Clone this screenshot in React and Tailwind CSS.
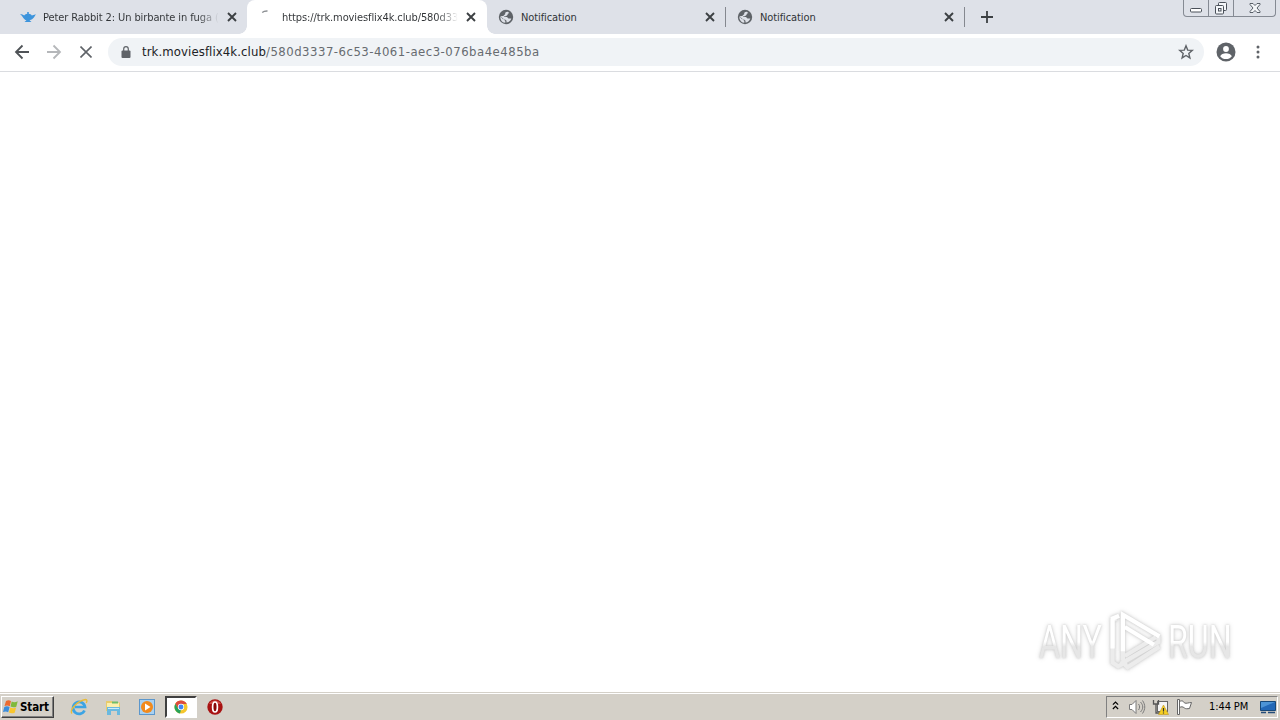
import React from "react";

const TABS = [
  { title: "Peter Rabbit 2: Un birbante in fuga (", icon: "lamp" },
  { title: "https://trk.moviesflix4k.club/580d33", icon: "loading", active: true },
  { title: "Notification", icon: "globe", divider: true },
  { title: "Notification", icon: "globe", divider: true },
];

function TabIcon({ name }) {
  if (name === "lamp") {
    return (
      <svg viewBox="0 0 16 16" className="h-4 w-4" fill="#3d94dc">
        <path d="M0 5.2c2 0 3 .5 4.2 1.3C5 5.400 6.200 5 7.200 4.800V3h1.600v1.800c1.400.2 2.400.8 3 1.700L16 5.200c-1.200 1-1.800 4.400-5 5.500l-1.500.6 2 1.700h-7l2-1.700C3.300 10.400 3 7 0 5.200z" />
      </svg>
    );
  }
  if (name === "loading") {
    return (
      <svg viewBox="0 0 16 16" className="h-4 w-4" fill="none">
        <path d="M3.200 3.500C4.500 2.300 6 1.900 8.500 2" stroke="#8b8e92" strokeWidth="1.300" />
      </svg>
    );
  }
  return (
    <svg viewBox="0 0 16 16" className="-ml-px h-4 w-4">
      <circle cx="8" cy="8" r="7.200" fill="#5f6368" />
      <path
        d="M9.800 2.800C7.500 2.800 7 4 7.200 5.200L5.500 6.500 6.300 8H9l1.500 1.500h2.800c-.6 2.200-2.500 3.900-4.800 4.100v-1.800L7 10.500l-2-.3-2.600-2.800c-.3 2.600 1 5 3.200 6l1.700.3V12L5 9.500 2.400 7.200 5 7l2.800.2L9.500 6l.3-1.300 1.500-.8z"
        fill="#dee1e8"
      />
    </svg>
  );
}

function Cross({ className }) {
  return (
    <svg viewBox="0 0 10 10" className={className} fill="none">
      <path d="M1 1l8 8M9 1 1 9" stroke="currentColor" strokeWidth="1.900" />
    </svg>
  );
}

function Tab({ title, icon, active, divider }) {
  return (
    <div
      className={
        active
          ? "relative flex h-[34px] w-60 items-center rounded-t-lg bg-white pl-3"
          : "relative flex h-[34px] w-[239px] items-center pl-3"
      }
    >
      {active && (
        <>
          <div className="absolute bottom-0 -left-2 h-2 w-2 bg-[radial-gradient(circle_at_0_0,transparent_7.500px,#fff_8px)]" />
          <div className="absolute -right-2 bottom-0 h-2 w-2 bg-[radial-gradient(circle_at_100%_0,transparent_7.500px,#fff_8px)]" />
        </>
      )}
      <TabIcon name={icon} />
      <div
        className={
          icon === "globe"
            ? "ml-[7px] w-[176px] overflow-hidden pt-[2px] text-[11px] tracking-[-0.1px] whitespace-nowrap"
            : "ml-[7px] w-[176px] overflow-hidden bg-linear-to-r from-[#303336] from-88% to-transparent bg-clip-text pt-[2px] text-[11px] tracking-[-0.1px] whitespace-nowrap text-transparent"
        }
      >
        {title}
      </div>
      <Cross className="ml-[8px] h-[10px] w-[10px] text-[#3c4043]" />
      {divider && <div className="ml-auto h-5 w-px bg-[#85888f]" />}
    </div>
  );
}

function WindowButtons() {
  return (
    <div className="ml-auto flex h-[17px] w-[93px] rounded-b-[4px] border border-t-0 border-[#858a93]">
      <div className="flex w-[25px] items-center justify-center border-r border-[#858a93]">
        <svg viewBox="0 0 12 16" className="h-4 w-3" fill="#fff" stroke="#4a5059">
          <rect x=".5" y="8.500" width="11" height="3.500" rx="1" />
        </svg>
      </div>
      <div className="flex w-[25px] items-center justify-center border-r border-[#858a93]">
        <svg viewBox="0 0 14 16" className="-ml-px h-4 w-3.5" fill="#f4f6f9" stroke="#4a5059">
          <rect x="4.500" y="2.500" width="8" height="8" rx="1" />
          <rect x="1.500" y="5.500" width="8" height="8.500" rx="1" />
          <rect x="4.500" y="8.500" width="2.500" height="2.500" />
        </svg>
      </div>
      <div className="flex flex-1 items-center justify-center">
        <svg viewBox="0 0 12 12" className="h-3 w-3" fill="#f4f6f9" stroke="#4a5059" strokeWidth=".9">
          <path d="M1 1.500h3l2 2 2-2h3v1L8 6l3 3.500v1H8l-2-2-2 2H1v-1L4 6 1 2.500z" />
        </svg>
      </div>
    </div>
  );
}

function TabStrip() {
  return (
    <div className="flex h-[34px] bg-[#dee1e8] pl-2 text-[#303336]">
      {TABS.map((tab, i) => (
        <Tab key={i} {...tab} />
      ))}
      <svg viewBox="0 0 12 12" className="mt-[11px] ml-[16px] h-3 w-3">
        <path d="M6 0v12M0 6h12" stroke="#3c4043" strokeWidth="1.800" />
      </svg>
      <WindowButtons />
      <div className="w-1" />
    </div>
  );
}

function Toolbar() {
  return (
    <div className="flex h-[38px] items-center border-b border-[#dadce0] bg-white pb-px pl-[14px] text-[#5f6368]">
      <svg viewBox="0 0 16 16" className="h-4 w-4" fill="none" stroke="#4f5357" strokeWidth="1.800">
        <path d="M15 8H2M8.500 1.500 2 8l6.500 6.500" />
      </svg>
      <svg viewBox="0 0 16 16" className="ml-4 h-4 w-4" fill="none" stroke="#b5b7ba" strokeWidth="1.800">
        <path d="M1 8h13M7.500 1.500 14 8l-6.500 6.500" />
      </svg>
      <svg viewBox="0 0 12 12" className="ml-[18px] h-3 w-3" fill="none" stroke="#5f6368" strokeWidth="1.600">
        <path d="M.5.5l11 11M11.500.5l-11 11" />
      </svg>
      <div className="ml-[16px] flex h-7 w-[1096px] items-center rounded-full bg-[#f0f3f6] pr-[10px] pl-[13px]">
        <svg viewBox="0 0 10 12" className="h-3 w-[10px]">
          <rect x=".5" y="4.500" width="9" height="7.500" rx="1" fill="#5f6368" />
          <path d="M2.700 5V3a2.300 2.300 0 0 1 4.600 0v2" fill="none" stroke="#5f6368" strokeWidth="1.200" />
        </svg>
        <div className="ml-[11px] text-[13px] tracking-[0.490px] whitespace-nowrap text-[#676b70]">
          <span className="tracking-[0.1px] text-[#202124]">trk.moviesflix4k.club</span>/580d3337-6c53-4061-aec3-076ba4e485ba
        </div>
        <svg viewBox="0 0 16 16" className="ml-auto h-4 w-4" fill="none" stroke="#5f6368" strokeWidth="1.400">
          <path d="m8 1.800 1.700 4.300 4.600.3-3.500 3 1.100 4.500L8 11.500l-3.900 2.400 1.100-4.500-3.500-3 4.600-.3z" />
        </svg>
      </div>
      <svg viewBox="0 0 20 20" className="ml-[12px] h-5 w-5">
        <circle cx="10" cy="10" r="9.500" fill="#5f6368" />
        <circle cx="10" cy="7" r="2.900" fill="#fff" />
        <path d="M4.200 14.200c1.300-4 10.300-4 11.600 0-2.700 3.800-8.900 3.800-11.600 0z" fill="#fff" />
      </svg>
      <svg viewBox="0 0 4 14" className="ml-[20px] h-3.5 w-1" fill="#5f6368">
        <circle cx="2" cy="2" r="1.500" />
        <circle cx="2" cy="7" r="1.500" />
        <circle cx="2" cy="12" r="1.500" />
      </svg>
    </div>
  );
}

function Watermark() {
  return (
    <div className="flex h-[66px] w-[194px] items-center justify-between font-[Roboto,sans-serif] text-[46px] leading-none text-white [filter:drop-shadow(0_0_1px_#ccc)_drop-shadow(0_0_2px_#ddd)]">
      <div className="w-[64px] pt-px">
        <div className="w-fit origin-left scale-x-[0.7] bg-linear-to-b from-white from-50% to-[#e6e6e6] to-60% bg-clip-text text-transparent">ANY</div>
      </div>
      <svg viewBox="0 0 58 64" className="h-[60px] w-[56px]" fill="none" strokeWidth="4.500">
        <path d="M8 8 4 10v45l6 4 9-5" stroke="#ececec" />
        <path d="M4 40V8l7-3" stroke="#fff" />
        <path d="M15 53V4M53 27v6L15 55l5 5 34-22M17 48l33-20" stroke="#ececec" />
        <path d="M15 43V4l39 23M17 17l31 19" stroke="#fff" />
      </svg>
      <div className="w-[65px] pt-px">
        <div className="w-fit origin-left scale-x-[0.7] bg-linear-to-b from-white from-50% to-[#e6e6e6] to-60% bg-clip-text text-transparent">RUN</div>
      </div>
    </div>
  );
}

function WindowsFlag() {
  return (
    <svg viewBox="0 0 16 16" className="h-4 w-4">
      <path d="M3 2c2-1 3.500-.8 5 .1L6.800 7.300C5 6.200 3.500 6.300 1.500 7z" fill="#ed6b2f" />
      <path d="M8.700 2.500c2 1 3.800.8 6-.2l-1.400 5.400c-2 .9-3.900.9-5.800-.1z" fill="#7fb93b" />
      <path d="M1.300 7.900c2-.9 3.600-.8 5.300.1l-1.400 5.200c-1.600-.9-3.200-1-5.200-.2z" fill="#3c8ddb" />
      <path d="M7.300 8.500c2 1 3.700.9 5.800 0l-1.400 5.200c-2 .9-3.800.9-5.800-.1z" fill="#f9c62e" />
    </svg>
  );
}

function QuickLaunch() {
  return (
    <>
      <svg viewBox="0 0 18 18" className="ml-[16px] h-[18px] w-[18px]" fill="none">
        <path d="M14.500 12.500A6 6 0 1 1 15 9H5" stroke="#3ca4e4" strokeWidth="2.700" />
        <path d="M2 15.500C-1 12 8 2.500 15.500 1.500c2 0 1.700 2 .7 3.500" stroke="#e9bb38" strokeWidth="1.300" />
      </svg>
      <svg viewBox="0 0 18 18" className="ml-[16px] h-[18px] w-[18px]">
        <path d="M2 3h6l1 1.500h7V13H2z" fill="#e8cb6c" />
        <path d="M3 5h12v6H3z" fill="#fbefae" />
        <path d="M8 3.500h6v2H8z" fill="#6fbd68" />
        <path d="M3 9h13v8h-3v-4H7v4H3z" fill="#6bb9df" />
        <path d="M4 10h11v1H4z" fill="#c8ebfa" />
      </svg>
      <svg viewBox="0 0 18 18" className="ml-[16px] h-[18px] w-[18px]">
        <rect x="1.500" y="1.500" width="15" height="15" fill="#a9d1f1" stroke="#5c97cc" />
        <circle cx="9" cy="9" r="6" fill="#f28a1c" />
        <path d="m7 5.500 5.500 3.500L7 12.500z" fill="#fff" />
      </svg>
      <div className="ml-[9px] flex h-[22px] w-8 items-center justify-center border-2 border-t-[#404040] border-r-white border-b-white border-l-[#404040] bg-white">
        <svg viewBox="0 0 16 16" className="h-[14px] w-[14px]">
          <circle cx="8" cy="8" r="7.500" fill="#f5c62c" />
          <path d="M1.500 4.300A7.500 7.500 0 0 1 14.600 4.500H8L4.700 10z" fill="#dd4b3e" />
          <path d="M1.500 4.300 4.800 10 8 11.500l-1.200 3.900A7.500 7.500 0 0 1 1.500 4.300z" fill="#27a35a" />
          <circle cx="8" cy="8" r="3.600" fill="#fff" />
          <circle cx="8" cy="8" r="2.800" fill="#4285f4" />
        </svg>
      </div>
      <svg viewBox="0 0 16 16" className="ml-[10px] h-4 w-4">
        <circle cx="8" cy="8" r="7.700" fill="#a81212" />
        <path d="M2 5a7 7 0 0 1 12 0z" fill="#cf4b45" />
        <ellipse cx="8" cy="8" rx="2.400" ry="5" fill="#8a0808" stroke="#fff" strokeWidth="1.700" />
      </svg>
    </>
  );
}

function Tray() {
  return (
    <div className="mr-[2px] ml-auto flex h-[22px] w-[172px] items-center border border-t-[#808080] border-r-white border-b-white border-l-[#808080] pl-[5px]">
      <svg viewBox="0 0 8 10" className="mb-[2px] h-[9px] w-[7px]" fill="none" stroke="#000" strokeWidth="1.400">
        <path d="m1 4 3-3 3 3M1 9l3-3 3 3" />
      </svg>
      <svg viewBox="0 0 18 16" className="ml-[9px] h-4 w-[18px]" fill="none" stroke="#7b7b7b">
        <path d="M1.500 5.500H4l4-4v13l-4-4H1.500z" fill="#fff" />
        <path d="M10.500 5c1.500 2 1.500 4 0 6M12.500 3c3 3.500 3 6.500 0 10M14.500 1.500c3 4.500 3 8.500 0 13" />
      </svg>
      <svg viewBox="0 0 18 16" className="ml-[6px] h-4 w-[18px]">
        <rect x="5.500" y="2.500" width="10" height="10" fill="#f5f5f5" stroke="#666" />
        <path d="M1.500 1v4h5V1M4 5v9h4" fill="none" stroke="#555" strokeWidth="1.300" />
        <path d="m11.500 6 5 9.500h-10z" fill="#f6cf22" stroke="#bf961b" strokeWidth=".6" />
        <path d="M11.500 9v3.500M11.500 13.500v1" stroke="#333" strokeWidth="1.200" />
      </svg>
      <svg viewBox="0 0 18 16" className="ml-[6px] h-4 w-[18px]" fill="#fff" stroke="#666">
        <path d="M1.500.5h2v15h-2zM3.500 2.500c3-1.500 4 0 5 1.500 2 .8 4-.5 7-.5l-2 6c-2 .3-4 .5-5-.5-2-1.500-3-1.500-5-.5z" />
      </svg>
      <div className="ml-[15px] pt-[2px] text-[11px] tracking-[-0.1px] whitespace-nowrap text-black">1:44 PM</div>
      <svg viewBox="0 0 16 14" className="mr-px ml-auto h-3.5 w-4">
        <path d="M.5 1.500h15v9H.5z" fill="#2368b7" stroke="#174879" />
        <path d="M1 2h14L1 8z" fill="#4d94d6" />
        <path d="M1 12.500h5M8 12.500h7" stroke="#254d79" strokeWidth="1.400" />
      </svg>
    </div>
  );
}

function Taskbar() {
  return (
    <div className="flex h-[28px] items-center border-t border-[#d4d0c8] bg-[#d4d0c8] pl-px shadow-[inset_0_1px_0_#fff]">
      <div className="flex h-[22px] w-[53px] items-center border border-t-white border-r-[#404040] border-b-[#404040] border-l-white pl-px text-[11.500px] font-bold text-black shadow-[inset_-1px_-1px_0_#808080]">
        <WindowsFlag />
        <span className="ml-px pt-[2px] tracking-[-0.1px]">Start</span>
      </div>
      <QuickLaunch />
      <Tray />
    </div>
  );
}

export default function App() {
  return (
    <div className="flex h-[720px] w-[1280px] flex-col overflow-hidden bg-white font-['DejaVu_Sans_Condensed','DejaVu_Sans',sans-serif]">
      <TabStrip />
      <Toolbar />
      <div className="flex flex-1 items-end justify-end pr-[47px] pb-[18px]">
        <Watermark />
      </div>
      <Taskbar />
    </div>
  );
}
